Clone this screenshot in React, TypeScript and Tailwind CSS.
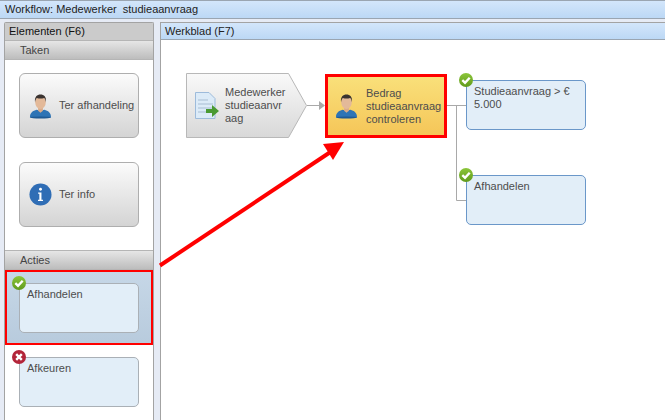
import type { ReactNode } from 'react';

const font = { fontFamily: '"Liberation Sans", Arial, sans-serif' };

function CheckBadge() {
  return (
    <svg viewBox="0 0 14 14" className="absolute left-[-8px] top-[-8px] h-[14px] w-[14px]">
      <defs>
        <linearGradient id="okFill" x1="0" y1="0" x2="0" y2="1">
          <stop offset="0" stopColor="#8cc63a" />
          <stop offset="1" stopColor="#5f9a1c" />
        </linearGradient>
      </defs>
      <circle cx="7" cy="7" r="7" fill="url(#okFill)" />
      <path d="M3.300 7.200 6 9.700 10.700 4.700" fill="none" stroke="#fff" strokeWidth="2.400" />
    </svg>
  );
}

function CrossBadge() {
  return (
    <svg viewBox="0 0 14 14" className="absolute left-[-8px] top-[-8px] h-[14px] w-[14px]">
      <circle cx="7" cy="7" r="7" fill="#b3253a" />
      <path d="M4.200 4.200 9.800 9.800M9.800 4.200 4.200 9.800" fill="none" stroke="#fff" strokeWidth="2.400" />
    </svg>
  );
}

function PersonIcon() {
  return (
    <svg viewBox="0 0 24 26" className="h-[26px] w-[23px] shrink-0">
      <path d="M1 25c0-5 3-7 7-8l4 1 4-1c4 1 7 3 7 8z" fill="#2e74b5" />
      <ellipse cx="12" cy="25" rx="11" ry="1" fill="#1f5a94" />
      <path d="M9.500 14h5v4l-2.500 2-2.500-2z" fill="#d8ab8a" />
      <ellipse cx="12" cy="9" rx="5.500" ry="7" fill="#e3b999" />
      <path d="M6.300 9C5.500 3.500 8.500 1 12 1s6.500 2.500 5.700 8c-.5-2.500-1-3.800-2-4.300-2 .8-5.500.8-7.400 0-1 .6-1.500 1.800-2 4.300z" fill="#3a3330" />
    </svg>
  );
}

function InfoIcon() {
  return (
    <svg viewBox="0 0 24 24" className="h-[23px] w-[23px] shrink-0">
      <circle cx="12" cy="12" r="11.500" fill="#2f6db5" />
      <circle cx="12" cy="6.500" r="1.500" fill="#fff" />
      <path d="M9.500 10h3.500v7.500h1.600v1.200H9.400v-1.200h1.400v-6.300H9.500z" fill="#fff" />
    </svg>
  );
}

function ActionCard({ label, badge }: { label: string; badge: 'check' | 'cross' }) {
  return (
    <div className="relative h-[50px] w-[120px] rounded-[5px] border border-[#aab0b6] bg-[#e2eef8] px-[7px] pt-[3px] text-[11px] leading-[15px] text-[#4d4d4d]">
      {label}
      {badge === 'check' ? <CheckBadge /> : <CrossBadge />}
    </div>
  );
}

function TaskCard({ label, icon }: { label: string; icon: ReactNode }) {
  return (
    <div className="flex h-[65px] w-[120px] items-center gap-[7px] rounded-[6px] border border-[#aeaeae] bg-gradient-to-b from-[#fbfbfb] to-[#d4d4d4] pl-[9px] text-[11px] text-[#4d4d4d]">
      {icon}
      <span className="whitespace-nowrap">{label}</span>
    </div>
  );
}

function SectionBar({ label }: { label: string }) {
  return (
    <div className="h-[20px] shrink-0 border-y border-[#b5b5b5] bg-gradient-to-b from-[#e6e6e6] to-[#bdbdbd] pl-[15px] text-[11px] leading-[18px] text-[#444]">
      {label}
    </div>
  );
}

function FlowNode({ label, className }: { label: string; className: string }) {
  return (
    <div className={`absolute h-[50px] w-[120px] rounded-[5px] border border-[#6a97c9] bg-[#e2eef8] px-[7px] pt-[4px] text-[11px] leading-[13px] text-[#4d4d4d] ${className}`}>
      {label}
      <CheckBadge />
    </div>
  );
}

export default function App() {
  return (
    <div className="relative flex h-[420px] w-[665px] flex-col overflow-hidden bg-[#e6ebf5]" style={font}>
      <div className="h-[19px] shrink-0 whitespace-pre border-y border-[#9aa5b1] bg-gradient-to-b from-[#d3e6fb] to-[#bcd8f5] pl-[5px] text-[11px] leading-[17px] text-[#222]">
        Workflow: Medewerker  studieaanvraag
      </div>

      <div className="flex min-h-0 flex-1 gap-[6px] pl-[4px] pt-[3px]">
        {/* Elementen */}
        <div className="flex w-[150px] shrink-0 flex-col rounded-t-[2px] border border-b-0 border-[#a3a3a3] bg-white">
          <div className="h-[17px] shrink-0 bg-[#cbcbcb] pl-[4px] text-[11px] leading-[17px] text-[#111]">Elementen (F6)</div>
          <SectionBar label="Taken" />
          <div className="flex h-[190px] shrink-0 flex-col gap-[24px] pl-[14px] pt-[13px]">
            <TaskCard label="Ter afhandeling" icon={<PersonIcon />} />
            <TaskCard label="Ter info" icon={<InfoIcon />} />
          </div>
          <SectionBar label="Acties" />
          <div className="flex h-[75px] shrink-0 items-center border-2 border-[#ff0000] bg-gradient-to-b from-[#c6d7e7] to-[#b8cbdd] pl-[12px]">
            <ActionCard label="Afhandelen" badge="check" />
          </div>
          <div className="pl-[14px] pt-[12px]">
            <ActionCard label="Afkeuren" badge="cross" />
          </div>
        </div>

        {/* Werkblad */}
        <div className="flex min-w-0 flex-1 flex-col border-l border-t border-[#a3a3a3] bg-white">
          <div className="h-[17px] shrink-0 border-b border-[#9aa5b1] bg-gradient-to-b from-[#d3e6fb] to-[#bcd8f5] pl-[4px] text-[11px] leading-[16px] text-[#222]">
            Werkblad (F7)
          </div>
          <div className="relative flex-1">
            <svg className="absolute left-0 top-0 h-[380px] w-[504px]" viewBox="0 0 504 380">
              <defs>
                <linearGradient id="startFill" x1="0" y1="0" x2="0" y2="1">
                  <stop offset="0" stopColor="#f9f9f9" />
                  <stop offset="1" stopColor="#d8d8d8" />
                </linearGradient>
              </defs>
              <path d="M146 65.500H160" stroke="#a9a9a9" fill="none" />
              <path d="M158 61l6 4.500-6 4.500z" fill="#a9a9a9" />
              <path d="M286 65.500H305M295.500 65.500V160.500H305" stroke="#a9a9a9" fill="none" />
              <path d="M25.500 33.500H127.500L145.500 65.500 127.500 97.500H25.500z" fill="url(#startFill)" stroke="#b8b8b8" />
              <path d="M34.500 52.500H48l6 6v20H34.500z" fill="#dcebf8" stroke="#9dbbdb" />
              <path d="M37 60h10M37 64h15M37 68h15M37 72h8" stroke="#a8bdd2" />
              <path d="M45 69h6v-4l7 6-7 6v-4h-6z" fill="#4a9a32" />
            </svg>

            <div className="absolute left-[64px] top-[46px] whitespace-nowrap text-[11px] leading-[13px] text-[#4d4d4d]">
              Medewerker
              <br />
              studieaanvr
              <br />
              aag
            </div>

            <div className="absolute left-[164px] top-[34px] flex h-[64px] w-[122px] items-center gap-[8px] border-[3px] border-[#ff0000] bg-gradient-to-b from-[#f9e07a] to-[#f5c658] pl-[7px] text-[11px] leading-[13px] text-[#4d4d4d]">
              <PersonIcon />
              <span className="whitespace-nowrap">
                Bedrag
                <br />
                studieaanvraag
                <br />
                controleren
              </span>
            </div>

            <FlowNode label="Studieaanvraag > € 5.000" className="left-[305px] top-[40px]" />
            <FlowNode label="Afhandelen" className="left-[305px] top-[135px]" />
          </div>
        </div>
      </div>

      {/* annotation arrow */}
      <svg className="absolute left-0 top-0 h-[420px] w-[665px]" viewBox="0 0 665 420">
        <path d="M160 265.500 332 151" stroke="#ff0000" strokeWidth="4" fill="none" />
        <path d="M344 142 323 144 333 160z" fill="#ff0000" />
      </svg>
    </div>
  );
}
